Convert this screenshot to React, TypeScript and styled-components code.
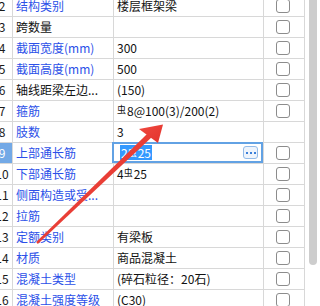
import React from "react";
import styled, { createGlobalStyle, css } from "styled-components";

const GlobalStyle = createGlobalStyle`
  html, body { margin: 0; padding: 0; background: #ffffff; }
  body { font-family: "Noto Sans CJK SC", "Noto Sans", sans-serif; font-size: 12px; color: #000; }
`;

const Page = styled.div`
  position: relative;
  width: 320px;
  height: 306px;
  overflow: hidden;
  display: flex;
  background: #ffffff;
`;

const Table = styled.div`
  flex: none;
  margin-left: -8px;
  margin-top: -4px;
  display: grid;
  grid-template-columns: 21px 101px 150px 41px;
  grid-auto-rows: 21px;
  align-self: flex-start;
`;

const cellBase = css`
  box-sizing: border-box;
  border-right: 1px solid #d8d8d8;
  border-bottom: 1px solid #d8d8d8;
  display: flex;
  align-items: center;
  white-space: nowrap;
  overflow: hidden;
  font-size: 12px;
  line-height: 20px;
`;

const RowNum = styled.div<{ $selected?: boolean }>`
  ${cellBase};
  justify-content: center;
  color: ${(p) => (p.$selected ? "#ffffff" : "#1a1a1a")};
  background: ${(p) => (p.$selected ? "#73a9e6" : "#ffffff")};
`;

const NameCell = styled.div<{ $tone: "blue" | "black" }>`
  ${cellBase};
  padding-left: 3px;
  color: ${(p) => (p.$tone === "blue" ? "#2b50e8" : "#111111")};
`;

const ValueCell = styled.div`
  ${cellBase};
  position: relative;
  overflow: visible;
  padding-left: 3px;
  color: #111111;
`;

const CheckCell = styled.div`
  ${cellBase};
  padding-left: 12px;
`;

const CheckBox = styled.span`
  box-sizing: border-box;
  width: 14px;
  height: 14px;
  border: 1px solid #8c8c8c;
  border-radius: 3px;
  background: #ffffff;
`;

const Steel = styled.span`
  font-size: 9px;
  line-height: 9px;
  position: relative;
  top: -2px;
  margin-right: 1px;
`;

const Editor = styled.div`
  position: absolute;
  top: -1px;
  left: -2px;
  right: 0;
  bottom: 0;
  box-sizing: border-box;
  border: 2px solid #62a2e4;
  background: #ffffff;
  display: flex;
  align-items: center;
  padding: 0 3px 0 6px;
  z-index: 1;
`;

const Selection = styled.span`
  background: #3399ff;
  color: #ffffff;
  line-height: 15px;
  padding: 0 1px;
`;

const EllipsisButton = styled.span`
  margin-left: auto;
  box-sizing: border-box;
  width: 15px;
  height: 13px;
  border: 1px solid #93bbe8;
  border-radius: 3px;
  background: #eef4fc;
  display: flex;
  align-items: center;
  justify-content: center;
  gap: 2px;
`;

const Dot = styled.span`
  width: 2px;
  height: 2px;
  background: #3b7fd9;
`;

const ScrollTrack = styled.div`
  flex: none;
  width: 15px;
  padding-left: 4px;
  box-sizing: border-box;
`;

const Thumb = styled.div`
  width: 8px;
  height: 270px;
  margin-top: -5px;
  border-radius: 4px;
  background: #cdcdcd;
`;

const ArrowLayer = styled.svg`
  position: absolute;
  left: 0;
  top: 0;
  width: 320px;
  height: 306px;
  pointer-events: none;
  z-index: 5;
`;

type Row = {
  n: number;
  name: string;
  tone: "blue" | "black";
  value?: React.ReactNode;
  check: boolean;
  editing?: boolean;
};

const S = () => <Steel>虫</Steel>;

const rows: Row[] = [
  { n: 2, name: "结构类别", tone: "blue", value: "楼层框架梁", check: true },
  { n: 3, name: "跨数量", tone: "black", value: "", check: true },
  { n: 4, name: "截面宽度(mm)", tone: "blue", value: "300", check: true },
  { n: 5, name: "截面高度(mm)", tone: "blue", value: "500", check: true },
  { n: 6, name: "轴线距梁左边...", tone: "black", value: "(150)", check: true },
  {
    n: 7,
    name: "箍筋",
    tone: "blue",
    value: (
      <>
        <S />8@100(3)/200(2)
      </>
    ),
    check: true,
  },
  { n: 8, name: "肢数", tone: "blue", value: "3", check: false },
  { n: 9, name: "上部通长筋", tone: "blue", check: true, editing: true },
  {
    n: 10,
    name: "下部通长筋",
    tone: "blue",
    value: (
      <>
        4<S />25
      </>
    ),
    check: true,
  },
  { n: 11, name: "侧面构造或受...", tone: "blue", value: "", check: true },
  { n: 12, name: "拉筋", tone: "blue", value: "", check: true },
  { n: 13, name: "定额类别", tone: "blue", value: "有梁板", check: true },
  { n: 14, name: "材质", tone: "blue", value: "商品混凝土", check: true },
  { n: 15, name: "混凝土类型", tone: "blue", value: "(碎石粒径：20石)", check: true },
  { n: 16, name: "混凝土强度等级", tone: "blue", value: "(C30)", check: true },
];

export default function App() {
  return (
    <>
      <GlobalStyle />
      <Page>
        <Table>
          {rows.map((r) => (
            <React.Fragment key={r.n}>
              <RowNum $selected={r.editing}>{r.n}</RowNum>
              <NameCell $tone={r.tone}>{r.name}</NameCell>
              <ValueCell>
                {r.editing ? (
                  <Editor>
                    <Selection>
                      2<S />25
                    </Selection>
                    <EllipsisButton>
                      <Dot />
                      <Dot />
                      <Dot />
                    </EllipsisButton>
                  </Editor>
                ) : (
                  r.value
                )}
              </ValueCell>
              <CheckCell>{r.check && <CheckBox />}</CheckCell>
            </React.Fragment>
          ))}
        </Table>
        <ScrollTrack>
          <Thumb />
        </ScrollTrack>
        <ArrowLayer viewBox="0 0 320 306">
          <defs>
            <linearGradient id="arrowShade" x1="0" y1="0" x2="1" y2="1">
              <stop offset="0" stopColor="#f04a40" />
              <stop offset="1" stopColor="#e2322c" />
            </linearGradient>
          </defs>
          <polygon
            points="37.8,243.9 36.2,242.1 147.6,133.5 151.4,137.5"
            fill="url(#arrowShade)"
          />
          <polygon points="163,124.5 139,129 158,143" fill="url(#arrowShade)" />
        </ArrowLayer>
      </Page>
    </>
  );
}
